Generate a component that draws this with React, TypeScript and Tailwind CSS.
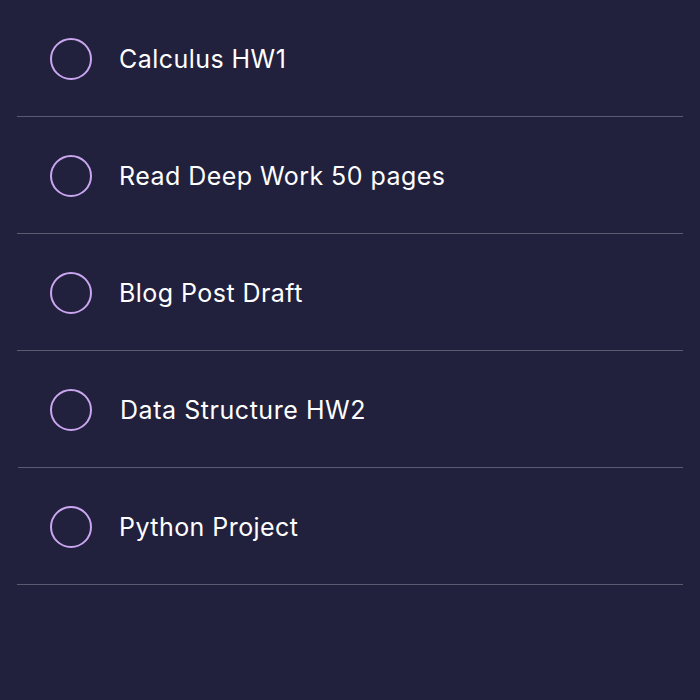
import React from "react";

const items = [
  { t: "Calculus HW1", shift: false },
  { t: "Read Deep Work 50 pages", shift: false },
  { t: "Blog Post Draft", shift: false },
  { t: "Data Structure HW2", shift: true },
  { t: "Python Project", shift: false },
];

export default function App() {
  return (
    <div className="w-[700px] h-[700px] bg-[#22213d] overflow-hidden" style={{ fontFamily: "Inter, 'Noto Sans', sans-serif" }}>
      <div className="mx-[17px] flex flex-col">
        {items.map(({ t, shift }) => (
          <div
            key={t}
            className={
              shift
                ? "h-[117px] border-b border-[#5b5a70] flex items-center pl-[32px] ml-[1px]"
                : "h-[117px] border-b border-[#5b5a70] flex items-center pl-[33px]"
            }
          >
            <div className="w-[42px] h-[42px] mt-[2px] rounded-full border-2 border-[#c9a6ef] shrink-0" />
            <span
              className={
                shift
                  ? "ml-[28px] mt-[3px] text-[25px] leading-none text-white tracking-[0.55px]"
                  : "ml-[27px] mt-[3px] text-[25px] leading-none text-white tracking-[0.45px]"
              }
            >
              {t}
            </span>
          </div>
        ))}
      </div>
    </div>
  );
}
